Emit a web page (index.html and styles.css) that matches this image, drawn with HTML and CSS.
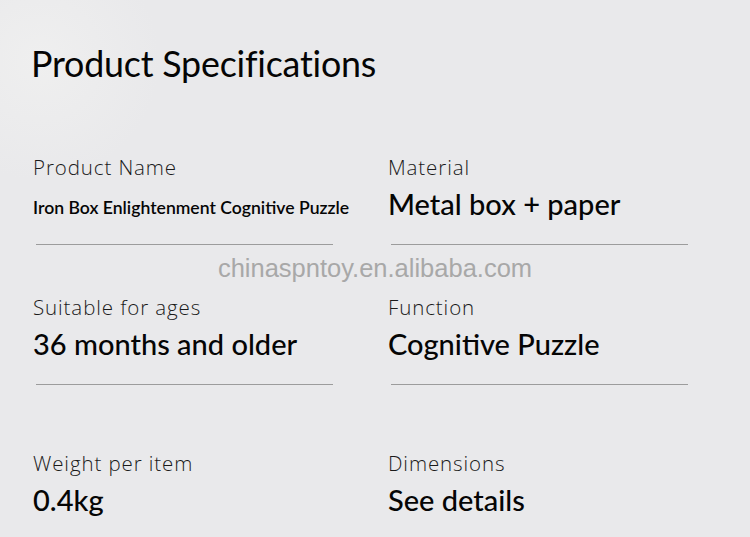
FILE: index.html
```html
<!DOCTYPE html>
<html lang="en">
<head>
<meta charset="utf-8">
<title>Product Specifications</title>
<link rel="stylesheet" href="styles.css">
</head>
<body>
<main class="page">
  <h1 class="title">Product Specifications</h1>
  <section class="specs">
    <div class="row row-1">
      <div class="cell">
        <div class="label">Product Name</div>
        <div class="value value-small">Iron Box Enlightenment Cognitive Puzzle</div>
        <div class="rule"></div>
      </div>
      <div class="cell">
        <div class="label">Material</div>
        <div class="value">Metal box + paper</div>
        <div class="rule"></div>
      </div>
    </div>
    <div class="row row-2">
      <div class="cell">
        <div class="label">Suitable for ages</div>
        <div class="value">36 months and older</div>
        <div class="rule"></div>
      </div>
      <div class="cell">
        <div class="label">Function</div>
        <div class="value">Cognitive Puzzle</div>
        <div class="rule"></div>
      </div>
    </div>
    <div class="row row-3">
      <div class="cell">
        <div class="label">Weight per item</div>
        <div class="value">0.4kg</div>
      </div>
      <div class="cell">
        <div class="label">Dimensions</div>
        <div class="value">See details</div>
      </div>
    </div>
  </section>
  <div class="watermark">chinaspntoy.en.alibaba.com</div>
</main>
</body>
</html>
```
FILE: styles.css
```css
html, body {
  margin: 0;
  padding: 0;
}
body {
  background: #e9e9eb;
  width: 750px;
  height: 537px;
  overflow: hidden;
}
.page {
  position: relative;
  width: 750px;
  height: 537px;
  box-sizing: border-box;
  padding: 40px 0 0 31px;
  background: radial-gradient(circle at 40px 60px, #efefef 0, #e9e9eb 120px);
  font-family: Lato, "Open Sans", sans-serif;
  color: #050505;
}
.title {
  margin: 0;
  font-size: 35.8px;
  font-weight: 400;
  line-height: 48px;
  letter-spacing: -0.2px;
}
.specs {
  display: flex;
  flex-direction: column;
}
.row {
  display: grid;
  grid-template-columns: 355px 355px;
}
.row-1 { margin-top: 67px; }
.row-2 { margin-top: 50px; }
.row-3 { margin-top: 66px; }
.cell {
  display: flex;
  flex-direction: column;
  padding-left: 2px;
}
.label {
  font-family: "Open Sans", sans-serif;
  font-weight: 300;
  font-size: 20.5px;
  line-height: 24px;
  letter-spacing: 0.9px;
  color: #1a1a1a;
}
.value {
  margin-top: 7px;
  font-size: 29px;
  line-height: 36px;
  font-weight: 500;
}
.value-small {
  margin-top: 14px;
  font-size: 17.6px;
  font-weight: 600;
  line-height: 29px;
}
.rule {
  margin-top: 22px;
  margin-left: 3px;
  width: 297px;
  height: 1px;
  background: #9c9c9c;
}
.watermark {
  position: absolute;
  left: 0;
  right: 0;
  top: 254px;
  text-align: center;
  font-family: "Liberation Sans", Arial, sans-serif;
  font-size: 25.5px;
  color: #a8a8a8;
}
```
